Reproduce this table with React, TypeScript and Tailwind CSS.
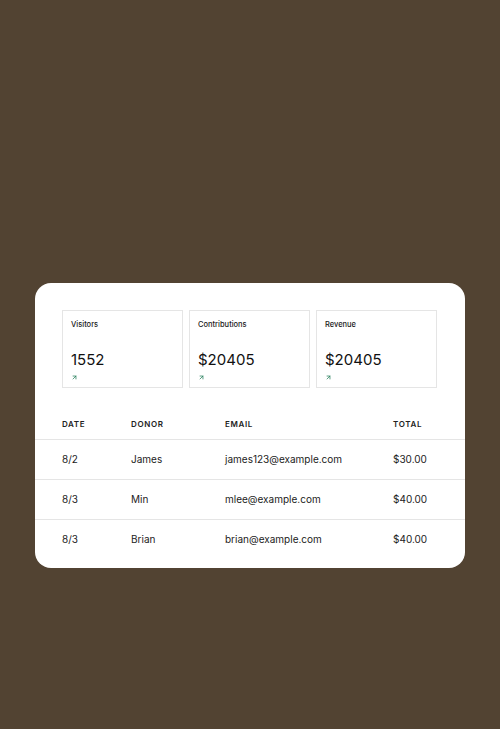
import { ArrowUpRight } from "lucide-react";

const stats = [
  { label: "Visitors", value: "1552" },
  { label: "Contributions", value: "$20405" },
  { label: "Revenue", value: "$20405" },
];

const rows = [
  { date: "8/2", donor: "James", email: "james123@example.com", total: "$30.00" },
  { date: "8/3", donor: "Min", email: "mlee@example.com", total: "$40.00" },
  { date: "8/3", donor: "Brian", email: "brian@example.com", total: "$40.00" },
];

export default function App() {
  return (
    <div
      className="flex h-[729px] w-full items-start justify-center bg-[#524332] pt-[283px]"
      style={{ fontFamily: "Inter, 'Liberation Sans', sans-serif" }}
    >
      <div className="w-[430px] overflow-hidden rounded-2xl bg-white pt-[27px] pb-[9px]">
        {/* stat cards */}
        <div className="flex gap-[6px] px-[27px]">
          {stats.map((s) => (
            <div
              key={s.label}
              className="flex h-[78px] w-[121px] flex-col border border-[#e5e5e5] px-[8px] pt-[9px]"
            >
              <div className="text-[7.5px] font-medium leading-[10px] text-[#1a1a1a]">
                {s.label}
              </div>
              <div className="mt-[20px] text-[15px] leading-[20px] text-[#111]">
                {s.value}
              </div>
              <ArrowUpRight className="mt-[4px] h-[7px] w-[7px] text-[#1f7a55]" strokeWidth={2.5} />
            </div>
          ))}
        </div>

        {/* table */}
        <table className="mt-[22px] w-full border-collapse text-left">
          <thead>
            <tr className="border-b border-[#e5e5e5]">
              <th className="h-[29px] w-[96px] pl-[27px] text-[8px] font-semibold tracking-[0.08em] text-[#222]">
                DATE
              </th>
              <th className="w-[94px] text-[8px] font-semibold tracking-[0.08em] text-[#222]">DONOR</th>
              <th className="w-[168px] text-[8px] font-semibold tracking-[0.08em] text-[#222]">EMAIL</th>
              <th className="text-[8px] font-semibold tracking-[0.08em] text-[#222]">TOTAL</th>
            </tr>
          </thead>
          <tbody>
            {rows.map((r, i) => (
              <tr
                key={i}
                className={i < rows.length - 1 ? "border-b border-[#e5e5e5]" : ""}
              >
                <td className="h-[40px] pl-[27px] text-[10px] text-[#222]">{r.date}</td>
                <td className="text-[10px] text-[#222]">{r.donor}</td>
                <td className="text-[10px] text-[#222]">{r.email}</td>
                <td className="text-[10px] text-[#222]">{r.total}</td>
              </tr>
            ))}
          </tbody>
        </table>
      </div>
    </div>
  );
}
